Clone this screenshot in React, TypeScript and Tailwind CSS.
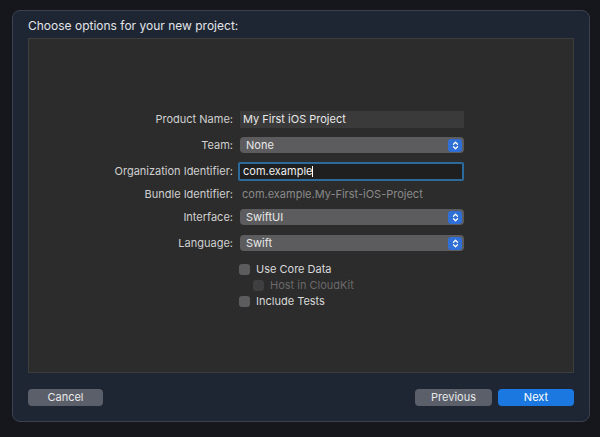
import React from "react";

const Chev = () => (
  <span className="w-[14px] h-[13px] rounded-[3px] bg-[#2f6fd6] flex items-center justify-center">
    <svg width="7" height="9" viewBox="0 0 7 9" fill="none" stroke="white" strokeWidth="1.3" strokeLinecap="round" strokeLinejoin="round">
      <path d="M1.5 3.2 3.5 1.3 5.5 3.2M1.5 5.8 3.5 7.7 5.5 5.8" />
    </svg>
  </span>
);

const Popup = ({ v }: { v: string }) => (
  <div className="w-[224px] h-[16px] rounded-[4px] bg-[#5c5c5e] flex items-center justify-between pl-[6px] pr-[2px] text-[11px] text-[#e8e8e8]">
    <span>{v}</span>
    <Chev />
  </div>
);

const Row = ({ label, children, h = "h-[26px]" }: { label: string; children: React.ReactNode; h?: string }) => (
  <div className={`flex items-center ${h}`}>
    <div className="w-[211px] text-right pr-[7px] text-[11px] text-[#d0d0d0]">{label}</div>
    {children}
  </div>
);

const Check = ({ label, dim, indent }: { label: string; dim?: boolean; indent?: boolean }) => (
  <div className={`flex items-center gap-[6px] h-[16px] ${indent ? "ml-[224px]" : "ml-[210px]"}`}>
    <span className={`w-[11px] h-[11px] rounded-[3px] ${dim ? "bg-[#3f3f41]" : "bg-[#5c5c5e]"}`} />
    <span className={`text-[11px] ${dim ? "text-[#6a6a6a]" : "text-[#d8d8d8]"}`}>{label}</span>
  </div>
);

export default function App() {
  return (
    <div className="w-[600px] h-[437px] bg-[#15171c] p-[10px_10px_15px_12px]" style={{ fontFamily: "Inter, 'Liberation Sans', sans-serif" }}>
      <div className="w-[578px] h-[412px] rounded-[8px] bg-[#1f2633] border border-[#3a4150] flex flex-col px-[15px]">
        <div className="text-[12px] text-[#e2e4e8] h-[27px] flex items-center pt-[2px]">Choose options for your new project:</div>
        <div className="h-[335px] bg-[#2c2c2c] border border-[#3d3d3d] pt-[67px]">
          <Row label="Product Name:">
            <div className="w-[224px] h-[17px] bg-[#3a3a3a] text-[11px] text-[#e8e8e8] pl-[3px] flex items-center">My First iOS Project</div>
          </Row>
          <Row label="Team:"><Popup v="None" /></Row>
          <Row label="Organization Identifier:">
            <div className="w-[226px] h-[19px] -ml-[2px] border-2 border-[#2d6a9c] rounded-[2px] bg-[#1f1f1f] text-[11px] text-[#f0f0f0] pl-[3px] flex items-center">com.example<span className="w-px h-[11px] bg-white" /></div>
          </Row>
          <Row label="Bundle Identifier:" h="h-[20px]">
            <div className="text-[11px] text-[#8a8a8a] pl-[2px]">com.example.My-First-iOS-Project</div>
          </Row>
          <Row label="Interface:"><Popup v="SwiftUI" /></Row>
          <Row label="Language:"><Popup v="Swift" /></Row>
          <div className="mt-[5px]" />
          <Check label="Use Core Data" />
          <Check label="Host in CloudKit" dim indent />
          <Check label="Include Tests" />
        </div>
        <div className="flex items-center justify-between mt-[16px]">
          <button className="w-[75px] h-[17px] rounded-[4px] bg-[#5a5f6a] text-[11px] text-[#e8e8e8]">Cancel</button>
          <div className="flex gap-[6px]">
            <button className="w-[77px] h-[17px] rounded-[4px] bg-[#5a5f6a] text-[11px] text-[#e8e8e8]">Previous</button>
            <button className="w-[76px] h-[17px] rounded-[4px] bg-[#1a78e0] text-[11px] text-white">Next</button>
          </div>
        </div>
      </div>
    </div>
  );
}
